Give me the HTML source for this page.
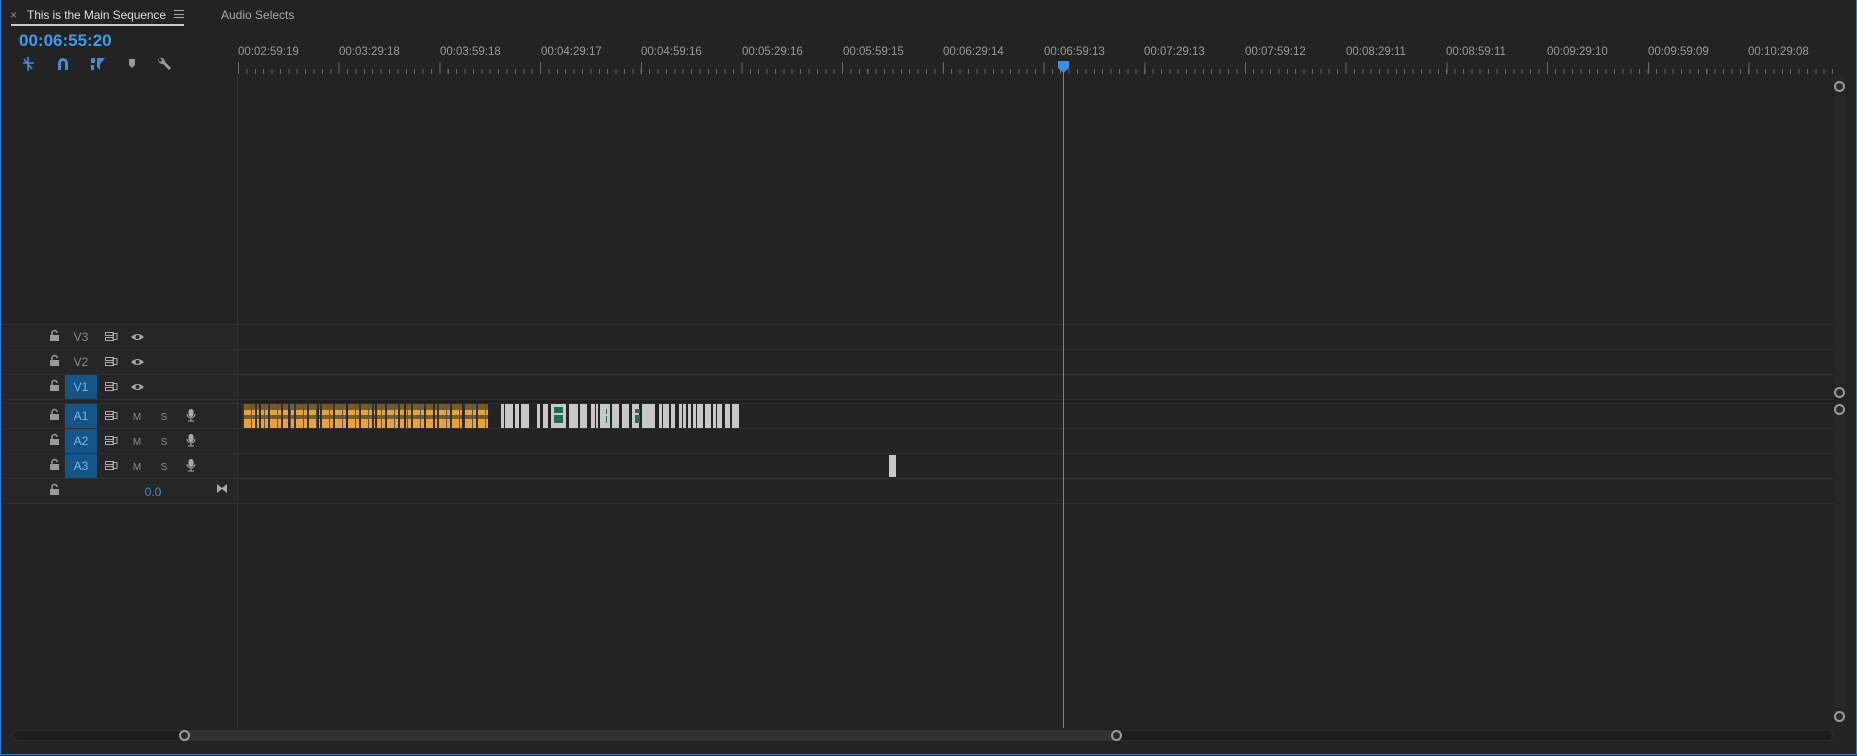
<!DOCTYPE html>
<html><head><meta charset="utf-8"><style>
*{margin:0;padding:0;box-sizing:border-box}
body{width:1857px;height:756px;background:#232323;overflow:hidden;position:relative;font-family:"Liberation Sans",sans-serif}
.a{position:absolute}
.frame{left:0;top:0;width:1857px;height:755px;border:1px solid #2d7fd6;border-top:none}
.tl{color:#9a9a9a;font-size:11.5px;top:46px}
.row{left:1px;width:1833px;height:1px;background:#2f2f2f}
.lab{left:65px;width:32px;height:24px;color:#8a8a8a;font-size:12px;line-height:24px;text-align:center}
.lab.on{background:#155487;color:#7fb4e3}
.wb{background:#c8c8c8;top:404px;height:24px}
.circ{width:11px;height:11px;border:2px solid #9a9a9a;border-radius:50%;background:#2a2a2a}
</style></head><body>
<div class="a" style="left:10px;top:8px;color:#8a8a8a;font-size:12px">×</div>
<div class="a" style="left:27px;top:8px;color:#dcdcdc;font-size:12px;letter-spacing:-0.1px">This is the Main Sequence</div>
<div class="a" style="left:174px;top:10px;width:10px;height:8px;border-top:1px solid #aaa;border-bottom:1px solid #aaa"></div>
<div class="a" style="left:174px;top:13.5px;width:10px;height:1px;background:#aaa"></div>
<div class="a" style="left:11px;top:24px;width:173px;height:2px;background:#c8c8c8"></div>
<div class="a" style="left:221px;top:8px;color:#a6a6a6;font-size:12px">Audio Selects</div>
<div class="a" style="left:19px;top:31px;color:#3e9cf0;font-size:17px;font-weight:bold">00:06:55:20</div>
<svg class="a" style="left:20px;top:56px" width="160" height="16" viewBox="0 0 160 16">
<g fill="#3a8fe0" stroke="#3a8fe0">
<path d="M3 7h11M8 1v14M4 3l8 10" stroke-width="1.6" fill="none"/>
<path d="M38 14V7a5 5 0 0 1 10 0v7h-3V7a2 2 0 0 0-4 0v7z" stroke="none"/>
<path d="M71 2h4v5h-4zM71 9h3v5h-3z" stroke="none"/><path d="M77 2h8l-5 6 0 6-3-3z" stroke="none"/>
</g>
<path d="M109 3h6v6l-3 3-3-3z" fill="#9a9a9a"/>
<path d="M139 2a4 4 0 0 0 4 6l6 6 2-2-6-6a4 4 0 0 0-5-4l2 2-1 2-2-1z" fill="#9a9a9a"/>
</svg>
<div class="a" style="left:238px;top:69px;width:1596px;height:5px;background:repeating-linear-gradient(90deg,#6a6a6a 0 1px,transparent 1px 8.39px)"></div>
<div class="a" style="left:238px;top:62px;width:1596px;height:12px;background:repeating-linear-gradient(90deg,#6a6a6a 0 1px,transparent 1px 100.7px)"></div>
<div class="a tl" style="left:238px">00:02:59:19</div>
<div class="a tl" style="left:339px">00:03:29:18</div>
<div class="a tl" style="left:440px">00:03:59:18</div>
<div class="a tl" style="left:541px">00:04:29:17</div>
<div class="a tl" style="left:641px">00:04:59:16</div>
<div class="a tl" style="left:742px">00:05:29:16</div>
<div class="a tl" style="left:843px">00:05:59:15</div>
<div class="a tl" style="left:943px">00:06:29:14</div>
<div class="a tl" style="left:1044px">00:06:59:13</div>
<div class="a tl" style="left:1144px">00:07:29:13</div>
<div class="a tl" style="left:1245px">00:07:59:12</div>
<div class="a tl" style="left:1346px">00:08:29:11</div>
<div class="a tl" style="left:1446px">00:08:59:11</div>
<div class="a tl" style="left:1547px">00:09:29:10</div>
<div class="a tl" style="left:1648px">00:09:59:09</div>
<div class="a tl" style="left:1748px">00:10:29:08</div>
<div class="a" style="left:1px;top:324px;width:236px;height:180px;background:#262626"></div>
<div class="a" style="left:237px;top:75px;width:1px;height:653px;background:#313131"></div>
<div class="a" style="left:238px;top:399px;width:1596px;height:4px;background:#1f1f1f"></div>
<div class="a row" style="top:324px"></div><div class="a row" style="top:349px"></div>
<div class="a row" style="top:374px"></div><div class="a row" style="top:399px"></div>
<div class="a row" style="top:403px"></div><div class="a row" style="top:428px"></div>
<div class="a row" style="top:453px"></div><div class="a row" style="top:478px"></div>
<div class="a row" style="top:503px"></div>
<div class="a lab" style="top:325px">V3</div>
<div class="a lab" style="top:350px">V2</div>
<div class="a lab on" style="top:375px">V1</div>
<div class="a lab on" style="top:404px">A1</div>
<div class="a lab on" style="top:429px">A2</div>
<div class="a lab on" style="top:454px">A3</div>
<svg class="a" style="left:0;top:324px" width="237" height="180">
<defs>
<g id="lk"><rect x="0" y="5" width="9" height="6" fill="#9a9a9a"/><path d="M2 5V3a2.5 2.5 0 0 1 5 0" stroke="#9a9a9a" stroke-width="1.5" fill="none"/></g>
<g id="sy"><rect x="0.5" y="0.5" width="8" height="3" fill="none" stroke="#aaa"/><rect x="0.5" y="5.5" width="8" height="3" fill="none" stroke="#aaa"/><rect x="8" y="1.5" width="4" height="6" fill="none" stroke="#aaa"/></g>
<g id="ey"><path d="M0 4Q6.5-2 13 4Q6.5 10 0 4z" fill="#aaa"/><circle cx="6.5" cy="4" r="2" fill="#262626"/></g>
<g id="mc"><rect x="2.5" y="0" width="5" height="8" rx="2.5" fill="#aaa"/><path d="M1 5a4 4 0 0 0 8 0M5 9v3M2 12h6" stroke="#aaa" fill="none"/></g>
</defs>
<use href="#lk" x="50" y="6"/><use href="#lk" x="50" y="31"/><use href="#lk" x="50" y="56"/>
<use href="#lk" x="50" y="85"/><use href="#lk" x="50" y="110"/><use href="#lk" x="50" y="135"/><use href="#lk" x="50" y="160"/>
<use href="#sy" x="105" y="8"/><use href="#sy" x="105" y="33"/><use href="#sy" x="105" y="58"/>
<use href="#sy" x="105" y="87"/><use href="#sy" x="105" y="112"/><use href="#sy" x="105" y="137"/>
<use href="#ey" x="131" y="9"/><use href="#ey" x="131" y="34"/><use href="#ey" x="131" y="59"/>
<use href="#mc" x="186" y="85"/><use href="#mc" x="186" y="110"/><use href="#mc" x="186" y="135"/>
<path d="M217 160l5 4 5-4v9l-5-4-5 4z" fill="#aaa"/>
<text x="137" y="96" fill="#8a8a8a" font-size="10" text-anchor="middle" font-family="Liberation Sans">M</text>
<text x="137" y="121" fill="#8a8a8a" font-size="10" text-anchor="middle" font-family="Liberation Sans">M</text>
<text x="137" y="146" fill="#8a8a8a" font-size="10" text-anchor="middle" font-family="Liberation Sans">M</text>
<text x="164" y="96" fill="#8a8a8a" font-size="10" text-anchor="middle" font-family="Liberation Sans">S</text>
<text x="164" y="121" fill="#8a8a8a" font-size="10" text-anchor="middle" font-family="Liberation Sans">S</text>
<text x="164" y="146" fill="#8a8a8a" font-size="10" text-anchor="middle" font-family="Liberation Sans">S</text>
<text x="153" y="172" fill="#3a8fe0" font-size="12" text-anchor="middle" font-family="Liberation Sans">0.0</text>
</svg>
<div class="a" style="left:242px;top:404px;width:246px;height:24px;background:linear-gradient(#7a5a28 0 25%,#e8a33c 25% 45%,#7a5a28 45% 62%,#e8a33c 62% 100%)"></div>
<div class="a" style="left:242px;top:404px;width:246px;height:24px;background:repeating-linear-gradient(90deg,#333 0 2px,transparent 2px 9px,#555 9px 10px,transparent 10px 13px)"></div>
<div class="a" style="left:242px;top:404px;width:246px;height:24px;background:repeating-linear-gradient(90deg,transparent 0 17px,#2a2a2a 17px 19px,transparent 19px 29px)"></div>
<div class="a wb" style="left:501px;width:3px"></div><div class="a wb" style="left:505px;width:8px"></div>
<div class="a wb" style="left:515px;width:4px"></div><div class="a wb" style="left:521px;width:8px"></div>
<div class="a wb" style="left:537px;width:3px"></div><div class="a wb" style="left:543px;width:5px"></div>
<div class="a wb" style="left:551px;width:15px"></div><div class="a wb" style="left:569px;width:9px"></div>
<div class="a wb" style="left:580px;width:7px"></div><div class="a wb" style="left:591px;width:4px"></div>
<div class="a wb" style="left:596px;width:2px"></div><div class="a wb" style="left:600px;width:10px"></div>
<div class="a wb" style="left:612px;width:7px"></div><div class="a wb" style="left:622px;width:7px"></div>
<div class="a wb" style="left:632px;width:7px"></div><div class="a wb" style="left:642px;width:13px"></div>
<div class="a wb" style="left:659px;width:3px"></div><div class="a wb" style="left:663px;width:6px"></div>
<div class="a wb" style="left:671px;width:4px"></div><div class="a wb" style="left:679px;width:3px"></div>
<div class="a wb" style="left:683px;width:3px"></div><div class="a wb" style="left:688px;width:3px"></div>
<div class="a wb" style="left:693px;width:3px"></div><div class="a wb" style="left:697px;width:6px"></div>
<div class="a wb" style="left:705px;width:6px"></div><div class="a wb" style="left:713px;width:3px"></div>
<div class="a wb" style="left:717px;width:5px"></div><div class="a wb" style="left:725px;width:5px"></div>
<div class="a wb" style="left:732px;width:7px"></div>
<div class="a" style="left:554px;top:407px;width:9px;height:6px;background:#1f6e50"></div>
<div class="a" style="left:554px;top:415px;width:9px;height:8px;background:#1f6e50"></div>
<div class="a" style="left:606px;top:409px;width:1px;height:5px;background:#1f6e50"></div>
<div class="a" style="left:606px;top:416px;width:1px;height:7px;background:#1f6e50"></div>
<div class="a" style="left:635px;top:409px;width:5px;height:4px;background:#1f6e50"></div>
<div class="a" style="left:635px;top:415px;width:5px;height:8px;background:#1f6e50"></div>
<div class="a" style="left:889px;top:455px;width:7px;height:22px;background:#c8c8c8"></div>
<div class="a" style="left:1063px;top:70px;width:1px;height:658px;background:#3a8fe0"></div>
<svg class="a" style="left:1057px;top:61px" width="13" height="12"><path d="M1 0h11v7l-5.5 5-5.5-5z" fill="#3a8fe0"/></svg>
<div class="a" style="left:1834px;top:76px;width:11px;height:322px;background:#262626;border-radius:5px"></div>
<div class="a" style="left:1834px;top:402px;width:11px;height:320px;background:#262626;border-radius:5px"></div>
<div class="a circ" style="left:1834px;top:81px"></div>
<div class="a circ" style="left:1834px;top:387px"></div>
<div class="a circ" style="left:1834px;top:404px"></div>
<div class="a circ" style="left:1834px;top:711px"></div>
<div class="a" style="left:13px;top:730px;width:1820px;height:11px;background:#1c1c1c;border:1px solid #2c2c2c;border-radius:6px"></div>
<div class="a" style="left:184px;top:730px;width:932px;height:11px;background:#313131"></div>
<div class="a circ" style="left:179px;top:730px"></div>
<div class="a circ" style="left:1111px;top:730px"></div>
<div class="a frame"></div>
</body></html>
